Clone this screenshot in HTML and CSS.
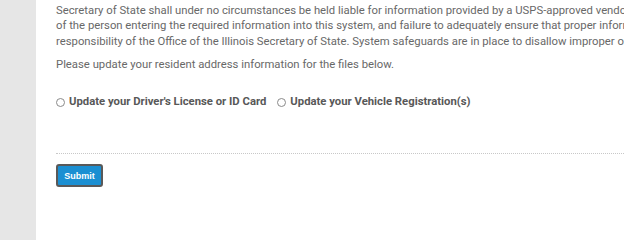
FILE: index.html
```html
<!DOCTYPE html>
<html lang="en">
<head>
<meta charset="utf-8">
<title>Address Change</title>
<link rel="stylesheet" href="styles.css">
</head>
<body>
<div class="page">
  <aside class="sidebar"></aside>
  <main class="content">
    <p class="notice">
      <span class="line">the Office of the Illinois Secretary of State under contract with the United States Postal Service. The Office of the Illinois</span>
      <span class="line">Secretary of State shall under no circumstances be held liable for information provided by a USPS-approved vendor</span>
      <span class="line">of the person entering the required information into this system, and failure to adequately ensure that proper information</span>
      <span class="line">responsibility of the Office of the Illinois Secretary of State. System safeguards are in place to disallow improper or</span>
    </p>
    <p class="instruction">Please update your resident address information for the files below.</p>
    <div class="options">
      <label class="option"><input type="radio" name="update" class="radio"><span>Update your Driver's License or ID Card</span></label>
      <label class="option"><input type="radio" name="update" class="radio"><span>Update your Vehicle Registration(s)</span></label>
    </div>
    <div class="divider"></div>
    <button class="submit" type="button">Submit</button>
  </main>
</div>
</body>
</html>
```
FILE: styles.css
```css
html, body {
  margin: 0;
  padding: 0;
  background: #ffffff;
}
body {
  overflow: hidden;
  font-family: Roboto, "Liberation Sans", Arial, sans-serif;
}
.page {
  display: flex;
  min-height: 100vh;
}
.sidebar {
  flex: 0 0 36px;
  background: #e6e6e6;
}
.content {
  flex: 1;
  min-width: 0;
  padding-left: 20px;
  overflow: hidden;
  color: #686868;
  font-size: 11.3px;
}
.notice {
  margin: -13px 0 0 0;
  line-height: 15.5px;
}
.line {
  display: block;
  white-space: nowrap;
}
.instruction {
  margin: 7.5px 0 0 0;
  line-height: 15.5px;
  white-space: nowrap;
}
.options {
  display: flex;
  gap: 11px;
  margin-top: 21.5px;
  white-space: nowrap;
}
.option {
  display: flex;
  align-items: center;
  gap: 4px;
  font-weight: bold;
  color: #585858;
  line-height: 15.5px;
}
.radio {
  appearance: none;
  -webkit-appearance: none;
  align-self: flex-end;
  width: 9px;
  height: 9px;
  margin: 0 0 2px 0;
  border: 1px solid #8a8a8a;
  border-radius: 50%;
  background: #ffffff;
  box-sizing: border-box;
}
.divider {
  margin-top: 44px;
  border-top: 1px dotted #c8c8c8;
  margin-right: -40px;
}
.submit {
  display: block;
  margin-top: 10px;
  width: 47px;
  height: 23px;
  padding: 0;
  background: #1b8fd2;
  border: 2px solid #595959;
  border-radius: 3px;
  color: #ffffff;
  font-family: "Liberation Sans", Arial, sans-serif;
  font-size: 9px;
  font-weight: bold;
}
```
